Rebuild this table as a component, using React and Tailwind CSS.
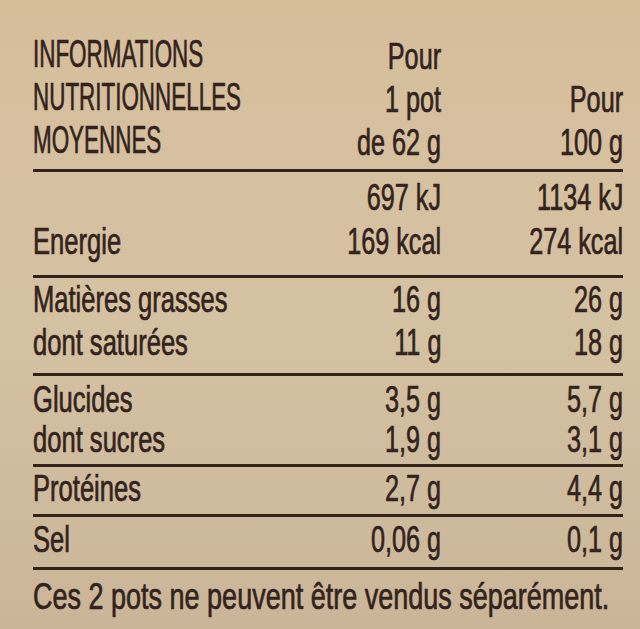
import React from "react";

function T({ children, right = false, kind = "n" }) {
  const origin = right ? "origin-right" : "origin-left";
  const sc =
    kind === "caps"
      ? "scale-x-[0.59] text-[38px]"
      : kind === "foot"
      ? "scale-x-[0.75]"
      : kind === "v"
      ? "scale-x-[0.7]"
      : "scale-x-[0.71]";
  return (
    <span className={`inline-block whitespace-nowrap ${origin} ${sc}`}>
      {children}
    </span>
  );
}

function Section({ rows, cls, lead }) {
  return (
    <div
      className={`grid grid-cols-[250px_158px_182px] border-b-[3px] border-[#33231c] ${lead} ${cls}`}
    >
      {rows.map((r, i) => (
        <React.Fragment key={i}>
          <div>{r[0] ? <T>{r[0]}</T> : "\u00a0"}</div>
          <div className="text-right">
            <T right kind="v">{r[1]}</T>
          </div>
          <div className="text-right">
            <T right kind="v">{r[2]}</T>
          </div>
        </React.Fragment>
      ))}
    </div>
  );
}

export default function App() {
  return (
    <div className="w-[640px] h-[629px] overflow-hidden bg-gradient-to-b from-[#d6be9b] via-[#d5c2a3] to-[#cab598] text-[#33231c] text-[36px] font-['Liberation_Sans',Arial,sans-serif] [-webkit-text-stroke:0.7px_#33231c]">
      <div className="pl-[33px] w-[623px]">
        {/* header */}
        <div className="grid grid-cols-[250px_158px_182px] pt-[33px] pb-[5px] border-b-[3px] border-[#33231c] leading-[43px]">
          <div className="flex flex-col">
            <T kind="caps">INFORMATIONS</T>
            <T kind="caps">NUTRITIONNELLES</T>
            <T kind="caps">MOYENNES</T>
          </div>
          <div className="flex flex-col items-end pt-[2px]">
            <T right kind="v">Pour</T>
            <T right kind="v">1 pot</T>
            <T right kind="v">de 62 g</T>
          </div>
          <div className="flex flex-col items-end justify-end">
            <T right kind="v">Pour</T>
            <T right kind="v">100 g</T>
          </div>
        </div>

        <Section
          lead="leading-[44px]"
          cls="pt-[4px] pb-[11px]"
          rows={[
            ["", "697 kJ", "1134 kJ"],
            ["Energie", "169 kcal", "274 kcal"],
          ]}
        />
        <Section
          lead="leading-[43px]"
          cls="pt-0 pb-[9px]"
          rows={[
            ["Matières grasses", "16 g", "26 g"],
            ["dont saturées", "11 g", "18 g"],
          ]}
        />
        <Section
          lead="leading-[40px]"
          cls="pt-[4px] pb-[4px]"
          rows={[
            ["Glucides", "3,5 g", "5,7 g"],
            ["dont sucres", "1,9 g", "3,1 g"],
          ]}
        />
        <Section
          lead="leading-[40px]"
          cls="pt-[2px] pb-[5px]"
          rows={[["Protéines", "2,7 g", "4,4 g"]]}
        />
        <Section
          lead="leading-[40px]"
          cls="pt-[3px] pb-[7px]"
          rows={[["Sel", "0,06 g", "0,1 g"]]}
        />
        <div className="pt-[7px] leading-[40px]">
          <T kind="foot">Ces 2 pots ne peuvent être vendus séparément.</T>
        </div>
      </div>
    </div>
  );
}
